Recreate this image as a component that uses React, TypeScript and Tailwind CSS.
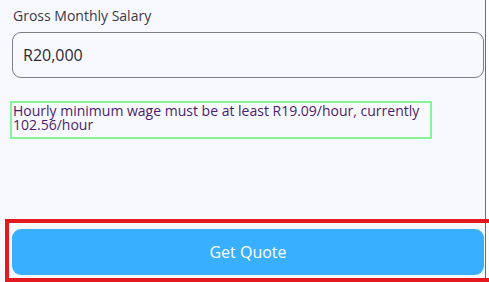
export default function App() {
  return (
    <div className="flex h-[282px] w-[489px] overflow-hidden bg-white font-['Open_Sans',sans-serif]">
      <div className="flex w-[486px] shrink-0 flex-col border-r border-[#6b6b78] bg-[#f8f9fe]">
        <label className="ml-[13px] mt-[6px] text-[14px] leading-[20px] text-[#3a3a44]">Gross Monthly Salary</label>
        <div className="ml-[12px] mt-[6px] flex h-[46px] w-[472px] items-center rounded-[9px] border border-[#7c7c8c] px-[10px]">
          <span className="text-[16px] text-[#2b2b33]">R20,000</span>
        </div>
        <div className="ml-[10px] mt-[23px] h-[38px] w-[422px] border-2 border-[#86f59a] pl-[1px] pt-[1px] text-[14px] leading-[14px] text-[#4a1d6e]">
          Hourly minimum wage must be at least R19.09/hour, currently 102.56/hour
        </div>
        <div className="mt-auto ml-[5px] h-[63px] w-[490px] border-4 border-[#e4191f] px-[3px] pt-[6px]">
          <button className="flex h-[46px] w-[472px] items-center justify-center rounded-[9px] bg-[#38b0ff] text-[16px] text-white">
            Get Quote
          </button>
        </div>
      </div>
    </div>
  );
}
